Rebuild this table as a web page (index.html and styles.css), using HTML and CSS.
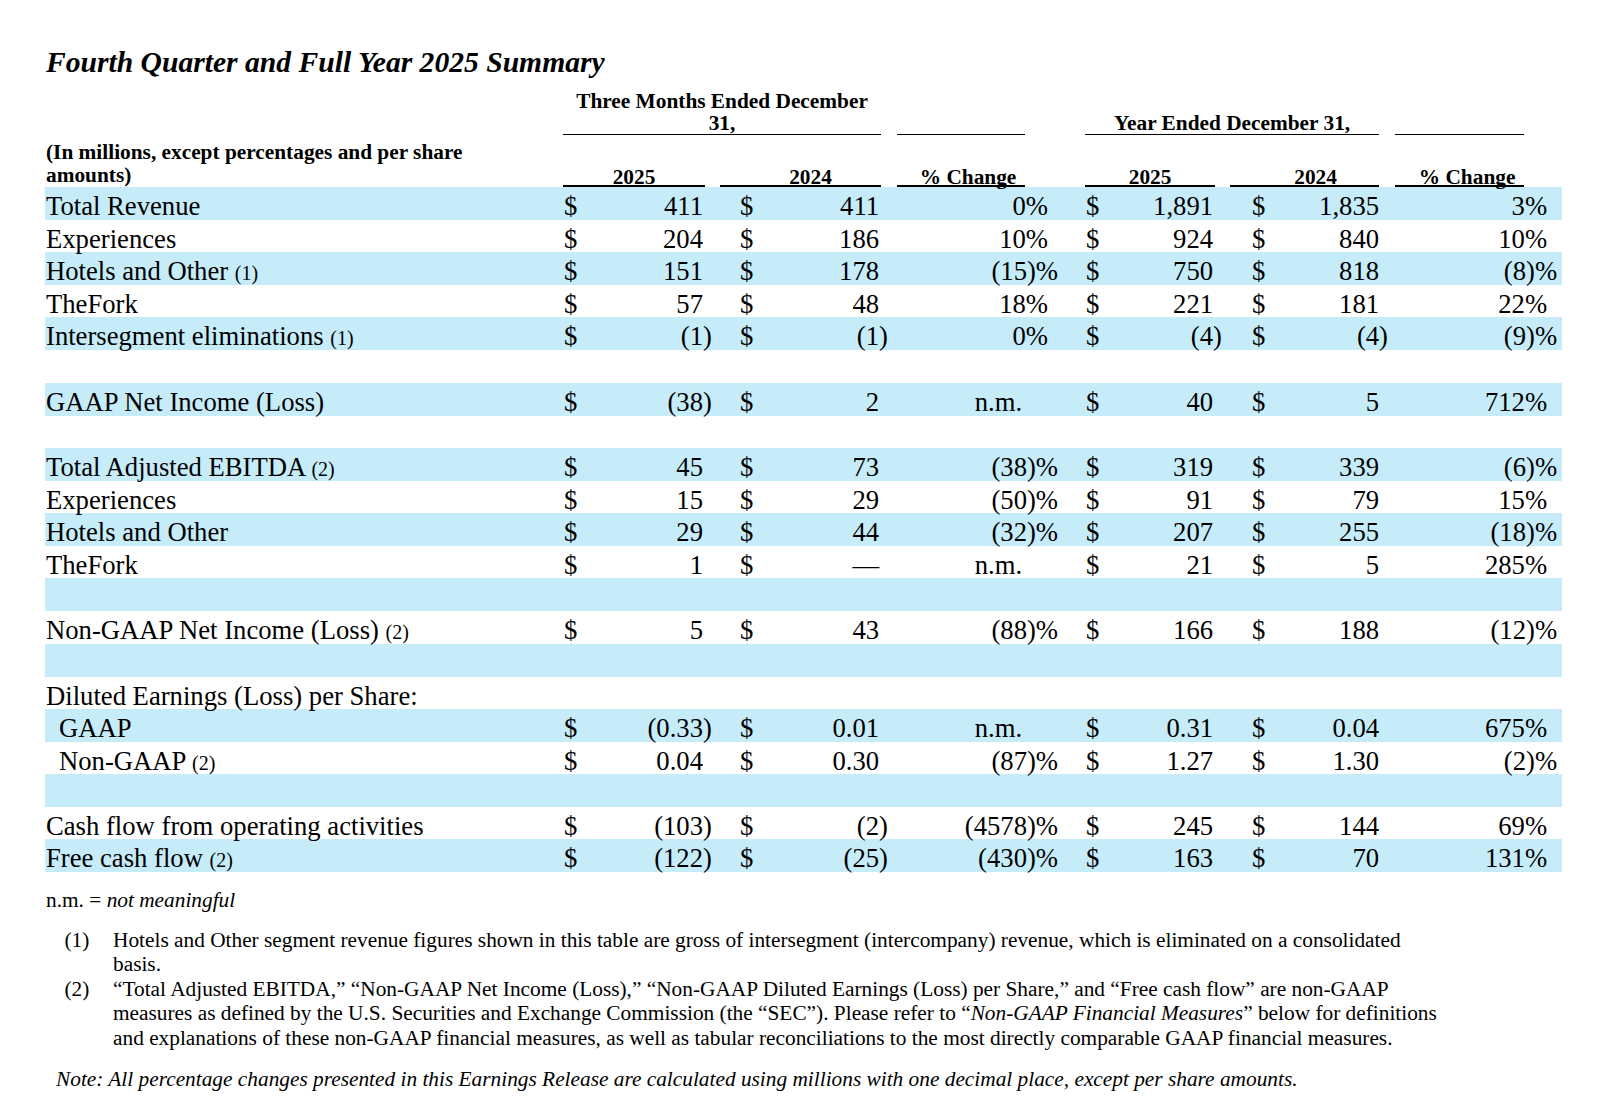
FILE: index.html
```html
<!DOCTYPE html>
<html lang="en">
<head>
<meta charset="utf-8">
<title>Fourth Quarter and Full Year 2025 Summary</title>
<link rel="stylesheet" href="styles.css">
</head>
<body>
<div class="page">
  <h1 class="title">Fourth Quarter and Full Year 2025 Summary</h1>
  <table class="summary">
    <colgroup>
      <col class="c-label"><col class="c-da"><col class="c-na"><col class="c-db"><col class="c-nb"><col class="c-pa"><col class="c-dc"><col class="c-nc"><col class="c-dd"><col class="c-nd"><col class="c-pb">
    </colgroup>
    <thead>
      <tr class="h1">
        <th></th>
        <th colspan="4"><div class="u1 ga">Three Months Ended December<br>31,</div></th>
        <th><div class="u1 pa"></div></th>
        <th colspan="4"><div class="u1 gb">Year Ended December 31,</div></th>
        <th><div class="u1 pb"></div></th>
      </tr>
      <tr class="h2">
        <th class="units"><span>(In millions, except percentages and per share amounts)</span></th>
        <th colspan="2"><div class="u2 ya">2025</div></th>
        <th colspan="2"><div class="u2 yb">2024</div></th>
        <th><div class="u2 pa">% Change</div></th>
        <th colspan="2"><div class="u2 yc">2025</div></th>
        <th colspan="2"><div class="u2 yd">2024</div></th>
        <th><div class="u2 pb">% Change</div></th>
      </tr>
    </thead>
    <tbody>
      <tr>
        <td class="lbl">Total Revenue</td>
        <td class="d da">$</td><td class="n">411<span class="rp"></span></td>
        <td class="d db">$</td><td class="n">411<span class="rp"></span></td>
        <td class="n">0%<span class="rp"></span></td>
        <td class="d dc">$</td><td class="n">1,891<span class="rp"></span></td>
        <td class="d dd">$</td><td class="n">1,835<span class="rp"></span></td>
        <td class="n p2">3%<span class="rp"></span></td>
      </tr>
      <tr>
        <td class="lbl">Experiences</td>
        <td class="d da">$</td><td class="n">204<span class="rp"></span></td>
        <td class="d db">$</td><td class="n">186<span class="rp"></span></td>
        <td class="n">10%<span class="rp"></span></td>
        <td class="d dc">$</td><td class="n">924<span class="rp"></span></td>
        <td class="d dd">$</td><td class="n">840<span class="rp"></span></td>
        <td class="n p2">10%<span class="rp"></span></td>
      </tr>
      <tr>
        <td class="lbl">Hotels and Other <span class="fn">(1)</span></td>
        <td class="d da">$</td><td class="n">151<span class="rp"></span></td>
        <td class="d db">$</td><td class="n">178<span class="rp"></span></td>
        <td class="n">(15)%</td>
        <td class="d dc">$</td><td class="n">750<span class="rp"></span></td>
        <td class="d dd">$</td><td class="n">818<span class="rp"></span></td>
        <td class="n p2">(8)%</td>
      </tr>
      <tr>
        <td class="lbl">TheFork</td>
        <td class="d da">$</td><td class="n">57<span class="rp"></span></td>
        <td class="d db">$</td><td class="n">48<span class="rp"></span></td>
        <td class="n">18%<span class="rp"></span></td>
        <td class="d dc">$</td><td class="n">221<span class="rp"></span></td>
        <td class="d dd">$</td><td class="n">181<span class="rp"></span></td>
        <td class="n p2">22%<span class="rp"></span></td>
      </tr>
      <tr>
        <td class="lbl">Intersegment eliminations <span class="fn">(1)</span></td>
        <td class="d da">$</td><td class="n">(1<span class="rp">)</span></td>
        <td class="d db">$</td><td class="n">(1<span class="rp">)</span></td>
        <td class="n">0%<span class="rp"></span></td>
        <td class="d dc">$</td><td class="n">(4<span class="rp">)</span></td>
        <td class="d dd">$</td><td class="n">(4<span class="rp">)</span></td>
        <td class="n p2">(9)%</td>
      </tr>
      <tr class="blank tall"><td colspan="11"></td></tr>
      <tr>
        <td class="lbl">GAAP Net Income (Loss)</td>
        <td class="d da">$</td><td class="n">(38<span class="rp">)</span></td>
        <td class="d db">$</td><td class="n">2<span class="rp"></span></td>
        <td class="n"><span class="nm">n.m.</span></td>
        <td class="d dc">$</td><td class="n">40<span class="rp"></span></td>
        <td class="d dd">$</td><td class="n">5<span class="rp"></span></td>
        <td class="n p2">712%<span class="rp"></span></td>
      </tr>
      <tr class="blank"><td colspan="11"></td></tr>
      <tr>
        <td class="lbl">Total Adjusted EBITDA <span class="fn">(2)</span></td>
        <td class="d da">$</td><td class="n">45<span class="rp"></span></td>
        <td class="d db">$</td><td class="n">73<span class="rp"></span></td>
        <td class="n">(38)%</td>
        <td class="d dc">$</td><td class="n">319<span class="rp"></span></td>
        <td class="d dd">$</td><td class="n">339<span class="rp"></span></td>
        <td class="n p2">(6)%</td>
      </tr>
      <tr>
        <td class="lbl">Experiences</td>
        <td class="d da">$</td><td class="n">15<span class="rp"></span></td>
        <td class="d db">$</td><td class="n">29<span class="rp"></span></td>
        <td class="n">(50)%</td>
        <td class="d dc">$</td><td class="n">91<span class="rp"></span></td>
        <td class="d dd">$</td><td class="n">79<span class="rp"></span></td>
        <td class="n p2">15%<span class="rp"></span></td>
      </tr>
      <tr>
        <td class="lbl">Hotels and Other</td>
        <td class="d da">$</td><td class="n">29<span class="rp"></span></td>
        <td class="d db">$</td><td class="n">44<span class="rp"></span></td>
        <td class="n">(32)%</td>
        <td class="d dc">$</td><td class="n">207<span class="rp"></span></td>
        <td class="d dd">$</td><td class="n">255<span class="rp"></span></td>
        <td class="n p2">(18)%</td>
      </tr>
      <tr>
        <td class="lbl">TheFork</td>
        <td class="d da">$</td><td class="n">1<span class="rp"></span></td>
        <td class="d db">$</td><td class="n">&mdash;<span class="rp"></span></td>
        <td class="n"><span class="nm">n.m.</span></td>
        <td class="d dc">$</td><td class="n">21<span class="rp"></span></td>
        <td class="d dd">$</td><td class="n">5<span class="rp"></span></td>
        <td class="n p2">285%<span class="rp"></span></td>
      </tr>
      <tr class="blank"><td colspan="11"></td></tr>
      <tr class="tall">
        <td class="lbl">Non-GAAP Net Income (Loss) <span class="fn">(2)</span></td>
        <td class="d da">$</td><td class="n">5<span class="rp"></span></td>
        <td class="d db">$</td><td class="n">43<span class="rp"></span></td>
        <td class="n">(88)%</td>
        <td class="d dc">$</td><td class="n">166<span class="rp"></span></td>
        <td class="d dd">$</td><td class="n">188<span class="rp"></span></td>
        <td class="n p2">(12)%</td>
      </tr>
      <tr class="blank"><td colspan="11"></td></tr>
      <tr>
        <td class="lbl" colspan="11">Diluted Earnings (Loss) per Share:</td>
      </tr>
      <tr>
        <td class="lbl ind">GAAP</td>
        <td class="d da">$</td><td class="n">(0.33<span class="rp">)</span></td>
        <td class="d db">$</td><td class="n">0.01<span class="rp"></span></td>
        <td class="n"><span class="nm">n.m.</span></td>
        <td class="d dc">$</td><td class="n">0.31<span class="rp"></span></td>
        <td class="d dd">$</td><td class="n">0.04<span class="rp"></span></td>
        <td class="n p2">675%<span class="rp"></span></td>
      </tr>
      <tr>
        <td class="lbl ind">Non-GAAP <span class="fn">(2)</span></td>
        <td class="d da">$</td><td class="n">0.04<span class="rp"></span></td>
        <td class="d db">$</td><td class="n">0.30<span class="rp"></span></td>
        <td class="n">(87)%</td>
        <td class="d dc">$</td><td class="n">1.27<span class="rp"></span></td>
        <td class="d dd">$</td><td class="n">1.30<span class="rp"></span></td>
        <td class="n p2">(2)%</td>
      </tr>
      <tr class="blank"><td colspan="11"></td></tr>
      <tr>
        <td class="lbl">Cash flow from operating activities</td>
        <td class="d da">$</td><td class="n">(103<span class="rp">)</span></td>
        <td class="d db">$</td><td class="n">(2<span class="rp">)</span></td>
        <td class="n">(4578)%</td>
        <td class="d dc">$</td><td class="n">245<span class="rp"></span></td>
        <td class="d dd">$</td><td class="n">144<span class="rp"></span></td>
        <td class="n p2">69%<span class="rp"></span></td>
      </tr>
      <tr>
        <td class="lbl">Free cash flow <span class="fn">(2)</span></td>
        <td class="d da">$</td><td class="n">(122<span class="rp">)</span></td>
        <td class="d db">$</td><td class="n">(25<span class="rp">)</span></td>
        <td class="n">(430)%</td>
        <td class="d dc">$</td><td class="n">163<span class="rp"></span></td>
        <td class="d dd">$</td><td class="n">70<span class="rp"></span></td>
        <td class="n p2">131%<span class="rp"></span></td>
      </tr>
    </tbody>
  </table>

  <p class="nm-note">n.m. = <em>not meaningful</em></p>

  <div class="notes">
    <div class="note-item">
      <span class="mark">(1)</span>
      <span class="txt">Hotels and Other segment revenue figures shown in this table are gross of intersegment (intercompany) revenue, which is eliminated on a consolidated basis.</span>
    </div>
    <div class="note-item">
      <span class="mark">(2)</span>
      <span class="txt">&ldquo;Total Adjusted EBITDA,&rdquo; &ldquo;Non-GAAP Net Income (Loss),&rdquo; &ldquo;Non-GAAP Diluted Earnings (Loss) per Share,&rdquo; and &ldquo;Free cash flow&rdquo; are non-GAAP measures as defined by the U.S. Securities and Exchange Commission (the &ldquo;SEC&rdquo;). Please refer to &ldquo;<em>Non-GAAP Financial Measures</em>&rdquo; below for definitions and explanations of these non-GAAP financial measures, as well as tabular reconciliations to the most directly comparable GAAP financial measures.</span>
    </div>
  </div>

  <p class="final-note">Note: All percentage changes presented in this Earnings Release are calculated using millions with one decimal place, except per share amounts.</p>
</div>
</body>
</html>
```

FILE: styles.css
```css
html, body {
  margin: 0;
  padding: 0;
  background: #ffffff;
}

body {
  font-family: "Liberation Serif", "Times New Roman", serif;
  color: #000000;
}

.page {
  padding: 45px 0 0 45px;
  width: 1517px;
}

.title {
  margin: 0;
  padding-left: 1px;
  font-size: 29.6px;
  line-height: 34px;
  font-weight: bold;
  font-style: italic;
}

/* ---------- table ---------- */
.summary {
  border-collapse: collapse;
  table-layout: fixed;
  width: 1517px;
}

.c-label { width: 518px; }
.c-da { width: 15px; }
.c-na { width: 135px; }
.c-db { width: 47px; }
.c-nb { width: 129px; }
.c-pa { width: 169px; }
.c-dc { width: 42px; }
.c-nc { width: 123px; }
.c-dd { width: 47px; }
.c-nd { width: 119px; }
.c-pb { width: 173px; }

.summary th {
  padding: 0;
  vertical-align: bottom;
  font-size: 21.33px;
  font-weight: bold;
  text-align: center;
  white-space: nowrap;
}

.h1 { height: 56px; }
.h2 { height: 52px; }

.u1 {
  border-bottom: 1px solid #000;
  line-height: 22px;
  min-height: 1px;
}

.u2 {
  border-bottom: 2px solid #000;
  line-height: 16px;
}

.ga { margin: 0 8px 0 0; }
.gb { margin: 0 10px 0 27px; }
.u1.pa { margin: 0 33px 0 8px; }
.u1.pb { margin: 0 38px 0 6px; }

.ya { margin: 0 8px 0 0; }
.yb { margin: 0 8px 0 7px; padding-left: 20px; }
.u2.pa { margin: 0 33px 0 8px; padding-left: 14px; }
.yc { margin: 0 8px 0 27px; }
.yd { margin: 0 10px 0 7px; padding-left: 22px; }
.u2.pb { margin: 0 38px 0 6px; padding-left: 15px; }

.summary th.units {
  text-align: left;
  white-space: normal;
  line-height: 23px;
}

.units span {
  display: block;
  width: 440px;
  padding-left: 1px;
}

/* rows mix 33px / 32px to average the 32.6px pitch of the source */
.summary tbody tr {
  height: 32px;
}

.summary tbody tr:nth-child(odd) {
  height: 33px;
  background: #c6ecfa;
}

.summary tbody tr.tall {
  height: 33px;
}

.summary td {
  padding: 7px 0 0 0;
  font-size: 26.67px;
  line-height: 24px;
  white-space: nowrap;
  vertical-align: top;
}

.summary td.lbl { padding-left: 1px; }
.summary td.ind { padding-left: 14px; }

.summary td.d { text-align: left; }
.summary td.da { padding-left: 1px; }
.summary td.db { padding-left: 27px; }
.summary td.dc { padding-left: 28px; }
.summary td.dd { padding-left: 29px; }

.summary td.n { text-align: right; }
.summary td.p2 { padding-right: 5px; }

.rp {
  display: inline-block;
  width: 10px;
  text-align: left;
  line-height: 16px;
}

.nm { padding-right: 36px; }

.fn {
  font-size: 20px;
  line-height: 10px;
}

/* ---------- footer ---------- */
.nm-note {
  margin: 16px 0 0 0;
  padding-left: 1px;
  font-size: 21.33px;
  line-height: 24.4px;
}

.notes {
  margin-top: 15.6px;
}

.note-item {
  display: flex;
  font-size: 21.33px;
  line-height: 24.4px;
}

.mark {
  flex: none;
  width: 48.5px;
  margin-left: 19.5px;
}

.txt {
  width: 1332px;
}

.final-note {
  margin: 16.8px 0 0 0;
  padding-left: 11px;
  font-size: 21.33px;
  line-height: 24.4px;
  font-style: italic;
}
```
